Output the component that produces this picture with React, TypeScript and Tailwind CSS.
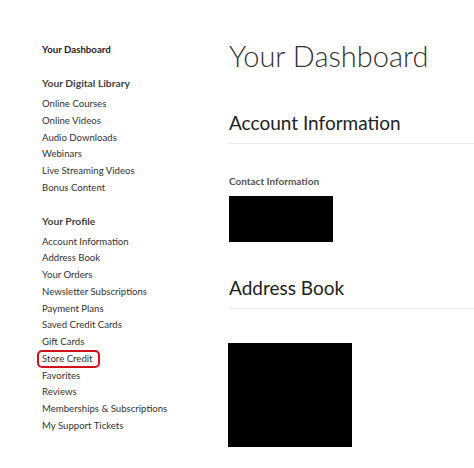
const libraryLinks = [
  "Online Courses",
  "Online Videos",
  "Audio Downloads",
  "Webinars",
  "Live Streaming Videos",
  "Bonus Content",
]

const profileLinks = [
  "Account Information",
  "Address Book",
  "Your Orders",
  "Newsletter Subscriptions",
  "Payment Plans",
  "Saved Credit Cards",
  "Gift Cards",
  "Store Credit",
  "Favorites",
  "Reviews",
  "Memberships & Subscriptions",
  "My Support Tickets",
]

const NavLink: React.FC<{ label: string }> = ({ label }) => {
  const highlighted = label === "Store Credit"
  return (
    <li className="h-[16.75px] leading-[16.75px]">
      {highlighted ? (
        <span className="relative inline-block">
          {label}
          <span className="absolute -left-[5px] -right-[7px] -top-[0.5px] -bottom-[0.5px] rounded-[5px] border-2 border-[#d0101b]" />
        </span>
      ) : (
        <a href="#" className="text-[#333]">
          {label}
        </a>
      )}
    </li>
  )
}

const Sidebar: React.FC = () => (
  <aside className="w-[229px] shrink-0 pl-[42px] pt-[41px] text-[9.6px] text-[#333]">
    <div className="h-[17px] leading-[17px] text-[9.7px] font-bold text-[#222]">
      Your Dashboard
    </div>
    <h3 className="mt-[17px] h-[17px] leading-[17px] text-[10.3px] font-bold text-[#444]">
      Your Digital Library
    </h3>
    <ul className="mt-[4px]">
      {libraryLinks.map((l) => (
        <NavLink key={l} label={l} />
      ))}
    </ul>
    <h3 className="mt-[16px] h-[17px] leading-[17px] text-[10.3px] font-bold text-[#444]">
      Your Profile
    </h3>
    <ul className="mt-[4px]">
      {profileLinks.map((l) => (
        <NavLink key={l} label={l} />
      ))}
    </ul>
  </aside>
)

export default function App() {
  return (
    <div
      className="flex min-h-[468px] w-full overflow-hidden bg-white"
      style={{ fontFamily: "Lato, 'Noto Sans', sans-serif" }}
    >
      <Sidebar />
      <main className="flex-1 pt-[38px] text-[#222]">
        <h1 className="text-[29px] leading-[35px] font-light text-[#333]">
          Your Dashboard
        </h1>
        <section className="mt-[38px]">
          <h2 className="border-b border-[#eaeaea] pb-[9px] text-[19px] leading-[23px]">
            Account Information
          </h2>
          <h4 className="mt-[31px] text-[10px] leading-[12px] font-bold text-[#555]">
            Contact Information
          </h4>
          <div className="mt-[9px] h-[46px] w-[104px] bg-black" />
        </section>
        <section className="mt-[34px]">
          <h2 className="border-b border-[#eaeaea] pb-[9px] text-[19px] leading-[23px]">
            Address Book
          </h2>
          <div className="mt-[34px] -ml-px h-[104px] w-[124px] bg-black" />
        </section>
      </main>
    </div>
  )
}
